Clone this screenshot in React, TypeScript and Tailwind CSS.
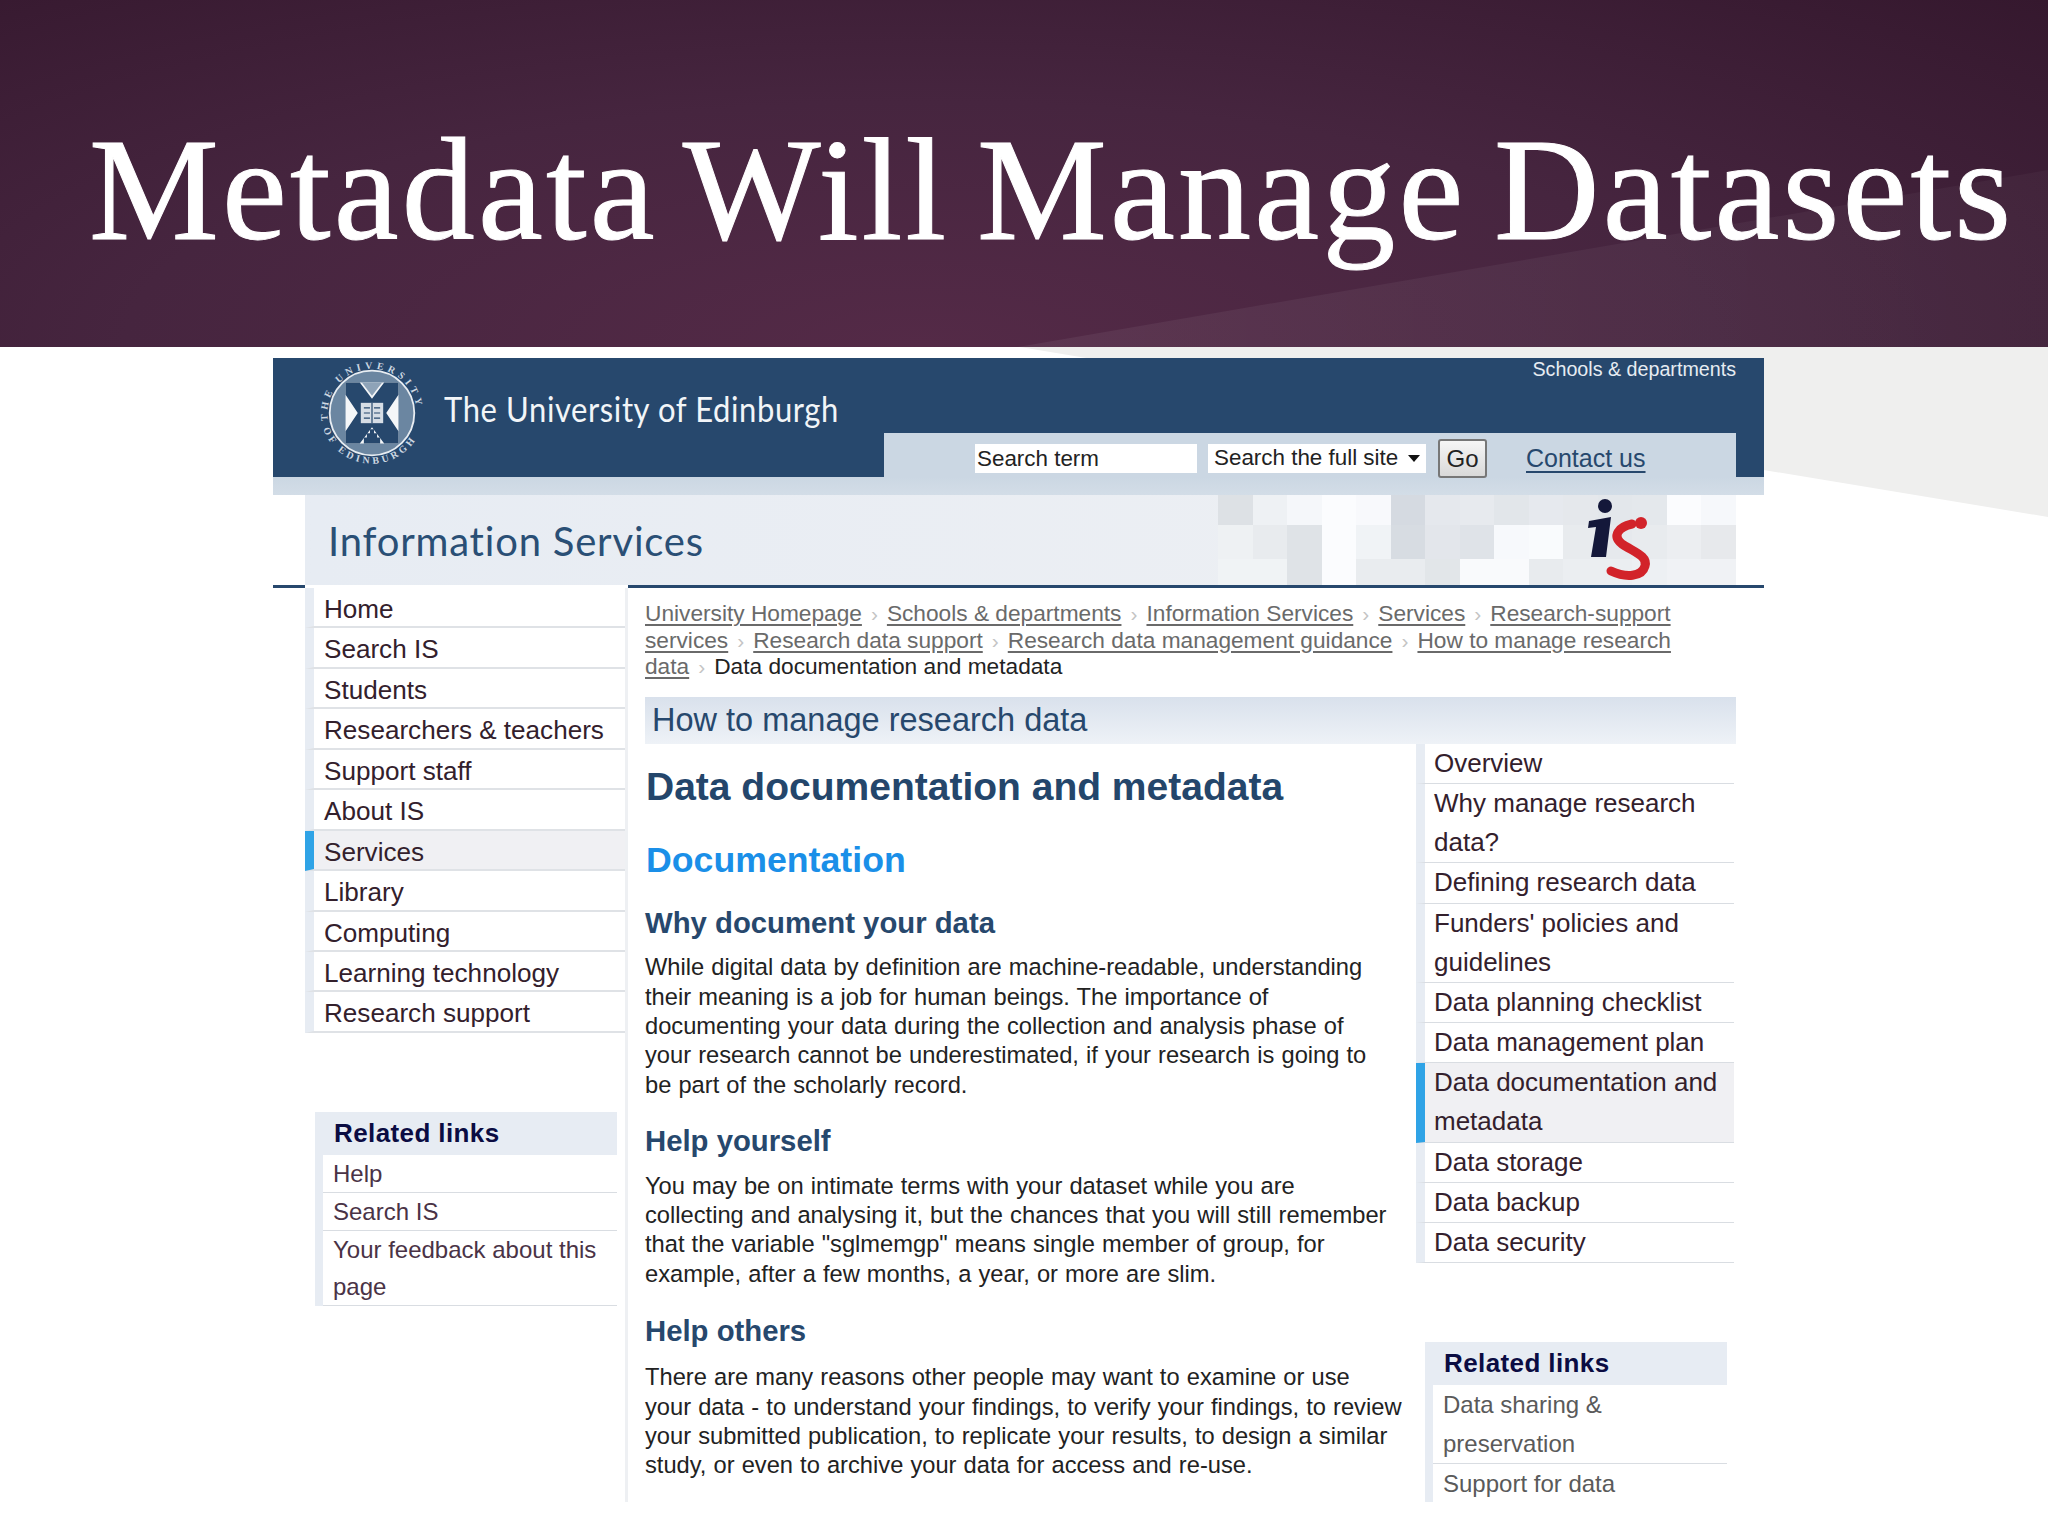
const mosaic = [
  ['#dde1e5', '#eef1f4', '#f5f7fa', '#fbfcfe', '#f8f9fc', '#d5dae1', '#e5e8ed', '#e7eaee', '#e2e6ea', '#e6e9ee', '#e5e8ec', '#e3e7eb', '#e4e8ec', '#fbfcfe', '#f6f8fb'],
  ['#eef1f3', '#e8ebee', '#dfe3e7', '#fbfcfe', '#f0f3f6', '#d7dce2', '#e3e6eb', '#dfe3e8', '#f7f9fc', '#f9fbfd', '#e8ebee', '#e6e9ed', '#e8ebee', '#eceef1', '#e7e9ec'],
  ['#f0f3f5', '#f0f3f5', '#dfe3e7', '#fbfcfe', '#e9ecef', '#e9ecef', '#e2e6e9', '#f9fafc', '#f9fafc', '#e8ebee', '#ebeef1', '#ebeef1', '#edf0f3', '#f0f2f5', '#f0f2f5'],
]

const leftNav = ['Home', 'Search IS', 'Students', 'Researchers & teachers', 'Support staff', 'About IS', 'Services', 'Library', 'Computing', 'Learning technology', 'Research support']

const rightNav = [
  { label: 'Overview' },
  { label: 'Why manage research data?' },
  { label: 'Defining research data' },
  { label: "Funders' policies and guidelines" },
  { label: 'Data planning checklist' },
  { label: 'Data management plan' },
  { label: 'Data documentation and metadata', active: true },
  { label: 'Data storage' },
  { label: 'Data backup' },
  { label: 'Data security' },
]

function Seal() {
  return (
    <svg width="108" height="108" viewBox="0 0 120 120" className="shrink-0">
      <defs>
        <path id="sealTop" d="M12 72 A49.5 49.5 0 1 1 109 68" />
        <path id="sealBottom" d="M4 70 A57 57 0 0 0 116 70" />
      </defs>
      <text fill="#ced8e2" fontSize="11" fontWeight="bold" fontFamily="Liberation Serif, serif" letterSpacing="4.6">
        <textPath href="#sealTop" startOffset="2%">THE UNIVERSITY</textPath>
      </text>
      <text fill="#ced8e2" fontSize="11" fontWeight="bold" fontFamily="Liberation Serif, serif" letterSpacing="3.8">
        <textPath href="#sealBottom" startOffset="5%">OF EDINBURGH</textPath>
      </text>
      <circle cx="60" cy="60" r="47" fill="#6b86a1" stroke="#e8edf2" strokeWidth="2" />
      <g transform="translate(60 60) scale(1.13) translate(-60 -60)">
        <rect x="34" y="30" width="52" height="60" fill="#f4f6f8" />
        <path d="M34 30 L48 30 L60 46 L72 30 L86 30 L86 42 L74 60 L86 78 L86 90 L72 90 L60 74 L48 90 L34 90 L34 78 L46 60 L34 42 Z" fill="#27486d" />
        <path d="M50 30 L70 30 L60 43 Z" fill="#8ea3b8" />
        <rect x="49" y="50" width="22" height="20" fill="#d6dde5" />
        <path d="M60 50 V70 M52 55 H58 M62 55 H68 M52 60 H58 M62 60 H68 M52 65 H58 M62 65 H68" stroke="#27486d" strokeWidth="1.2" />
        <path d="M52 90 V84 H55 V80 H58 V76 H62 V80 H65 V84 H68 V90 Z" fill="#27486d" />
      </g>
    </svg>
  )
}

function IsLogo() {
  return (
    <svg viewBox="1585 495 70 90" className="absolute left-[367px] top-0 w-[70px] h-[90px]">
      <circle cx="1605" cy="506" r="7" fill="#14183a" />
      <path d="M1589 521 L1611 517 L1606 557 L1591 557 L1596 527 L1588 528 Z" fill="#14183a" />
      <circle cx="1641" cy="523" r="6" fill="#d2232a" />
      <path d="M1632 524 C1618 527 1612 536 1622 544 C1634 552 1648 556 1645 566 C1642 577 1626 578 1611 571" fill="none" stroke="#d2232a" strokeWidth="9" strokeLinecap="round" />
    </svg>
  )
}

function Crumb({ children }: { children: React.ReactNode }) {
  return <a className="underline underline-offset-[3px] text-[#6a6a6a]">{children}</a>
}

function Sep() {
  return <span className="inline-block w-[25px] text-center text-[#c4c4c4] text-[21px] leading-none">›</span>
}

function RelatedBox({ items, lead }: { items: string[]; lead: string }) {
  return (
    <div className="w-[302px] bg-[#e7ecf3]">
      <div className="h-[43px] flex items-center pl-[19px] text-[26px] font-bold tracking-[0.4px] text-[#0b0c42]">Related links</div>
      <ul className="ml-[8px] bg-white">
        {items.map((item) => (
          <li key={item} className={`pl-[10px] pr-2 text-[24px] border-b border-[#d9dde2] ${lead}`}>
            {item}
          </li>
        ))}
      </ul>
    </div>
  )
}

export default function App() {
  return (
    <div className="relative w-[2048px] h-[1536px] overflow-hidden bg-white font-['Liberation_Sans',Arial,sans-serif]">
      {/* slide title */}
      <header className="relative h-[347px] bg-[radial-gradient(ellipse_at_45%_100%,#542a47_0%,#46253f_50%,#35182e_100%)]">
        <div className="absolute inset-0 bg-gradient-to-r from-white/[0.09] to-white/[0.03] [clip-path:polygon(1018px_347px,2048px_170px,2048px_347px)]" />
        <h1 className="relative pl-[89px] pt-[117px] text-[146px] leading-none tracking-[3.2px] [word-spacing:-12px] text-white whitespace-nowrap font-['Liberation_Serif',serif] [-webkit-text-stroke:1px_white]">
          Metadata Will Manage Datasets
        </h1>
      </header>

      <div className="relative h-[1189px]">
        <div className="absolute inset-0 bg-[#efefee] [clip-path:polygon(1020px_0px,2048px_0px,2048px_170px)]" />

        {/* embedded page screenshot */}
        <div className="relative ml-[273px] top-[11px] w-[1491px] h-[1144px] overflow-hidden bg-white">
          <div className="flex h-[119px] bg-[#27486d]">
            <div className="flex pl-[45px] pt-[1px] w-[611px]">
              <Seal />
              <div className="pl-[18px] pt-[31px] text-[31px] leading-[40px] text-[#f2f5f8] font-['Lato',sans-serif] tracking-[0.6px] whitespace-nowrap origin-left scale-y-[1.12]">
                The University of Edinburgh
              </div>
            </div>
            <div className="flex flex-col w-[852px]">
              <div className="text-right text-[19.7px] leading-[22px] text-[#e6ecf2]">Schools &amp; departments</div>
              <div className="mt-auto h-[44px] bg-[#cbd7e3] flex items-center pl-[91px] pt-[6px]">
                <div className="w-[222px] h-[29px] bg-white pl-[2px] text-[22.4px] leading-[30px] text-[#222]">Search term</div>
                <div className="ml-[11px] w-[218px] h-[29px] bg-white pl-[6px] flex items-center text-[22.4px] leading-[30px] text-[#222]">
                  Search the full site
                  <span className="ml-[10px] w-0 h-0 border-x-[6px] border-x-transparent border-t-[7px] border-t-[#111]" />
                </div>
                <div className="ml-[12px] w-[49px] h-[39px] shrink-0 rounded-[3px] border-2 border-[#777] bg-gradient-to-b from-[#f6f6f6] to-[#d9d9d9] text-center text-[24px] leading-[35px] text-[#222]">Go</div>
                <a className="ml-[39px] mt-[2px] text-[25px] underline underline-offset-[4px] text-[#27486d]">Contact us</a>
              </div>
            </div>
          </div>

          <div className="h-[18px] bg-gradient-to-b from-[#cbd7e3] to-[#d3dde7]" />

          <div className="flex h-[90px] pl-[32px] pr-[28px]">
            <div className="flex-1 flex bg-gradient-to-r from-[#e7ecf3] to-[#eef0f3]">
              <div className="w-[913px] pl-[23px] pt-[23px] text-[40px] leading-[46px] text-[#2a4f75] font-['Lato',sans-serif] tracking-[0.8px] whitespace-nowrap">
                Information Services
              </div>
              <div className="relative flex-1 flex flex-col">
                {mosaic.map((row, r) => (
                  <div key={r} className={`flex ${r === 0 ? 'h-[30px]' : r === 1 ? 'h-[34px]' : 'h-[26px]'}`}>
                    {row.map((c, i) => (
                      <div key={i} className="flex-1" style={{ backgroundColor: c }} />
                    ))}
                  </div>
                ))}
                <IsLogo />
              </div>
            </div>
          </div>

          <div className="flex h-[3px]">
            <div className="w-[32px] bg-[#27486d]" />
            <div className="w-[323px]" />
            <div className="flex-1 bg-[#27486d]" />
          </div>

          <div className="flex">
            {/* left column */}
            <div className="w-[355px] shrink-0 pl-[32px]">
              <ul className="w-[320px] text-[26.1px] text-[#33202c]">
                {leftNav.map((item) => (
                  <li
                    key={item}
                    className={`h-[40.45px] pt-[2px] leading-[38px] pl-[10px] border-l-[9px] border-b-2 border-b-[#dfe2e6] ${item === 'Services' ? 'border-l-[#2fa3e6] bg-[#f0f0f3]' : 'border-l-[#e7ecf3]'}`}
                  >
                    {item}
                  </li>
                ))}
              </ul>
              <div className="mt-[79px] ml-[10px] text-[#4a3346]">
                <RelatedBox items={['Help', 'Search IS', 'Your feedback about this page']} lead="leading-[37px]" />
              </div>
            </div>

            {/* page content */}
            <div className="flex-1 border-l-[3px] border-[#eef0f3] -ml-[3px] pl-[17px] pr-[28px]">
              <p className="pt-[12px] text-[22.7px] leading-[26.5px] text-[#222] whitespace-nowrap">
                <Crumb>University Homepage</Crumb><Sep /><Crumb>Schools &amp; departments</Crumb><Sep /><Crumb>Information Services</Crumb><Sep /><Crumb>Services</Crumb><Sep /><Crumb>Research-support</Crumb>
                <br />
                <Crumb>services</Crumb><Sep /><Crumb>Research data support</Crumb><Sep /><Crumb>Research data management guidance</Crumb><Sep /><Crumb>How to manage research</Crumb>
                <br />
                <Crumb>data</Crumb><Sep />Data documentation and metadata
              </p>

              <div className="mt-[17.5px] h-[47px] pl-[7px] bg-gradient-to-b from-[#d9e1ec] to-[#eef2f7] text-[32.5px] leading-[47px] text-[#27486d]">
                How to manage research data
              </div>

              <div className="flex">
                <div className="w-[771px] shrink-0 text-[#222]">
                  <h2 className="mt-[21px] ml-[1px] text-[39px] leading-[44px] font-bold text-[#24466b]">Data documentation and metadata</h2>
                  <h2 className="mt-[31px] ml-[1px] text-[35.7px] leading-[40px] font-bold text-[#1a8fe8]">Documentation</h2>

                  <h3 className="mt-[26px] text-[29.3px] leading-[34px] font-bold text-[#27486d]">Why document your data</h3>
                  <p className="mt-[13.4px] text-[23.7px] leading-[29.3px] [word-spacing:0.5px] whitespace-nowrap">
                    While digital data by definition are machine-readable, understanding
                    <br />their meaning is a job for human beings. The importance of
                    <br />documenting your data during the collection and analysis phase of
                    <br />your research cannot be underestimated, if your research is going to
                    <br />be part of the scholarly record.
                  </p>

                  <h3 className="mt-[24px] text-[29.3px] leading-[34px] font-bold text-[#27486d]">Help yourself</h3>
                  <p className="mt-[14px] text-[23.7px] leading-[29.3px] [word-spacing:0.5px] whitespace-nowrap">
                    You may be on intimate terms with your dataset while you are
                    <br />collecting and analysing it, but the chances that you will still remember
                    <br />that the variable "sglmemgp" means single member of group, for
                    <br />example, after a few months, a year, or more are slim.
                  </p>

                  <h3 className="mt-[25.4px] text-[29.3px] leading-[34px] font-bold text-[#27486d]">Help others</h3>
                  <p className="mt-[15px] text-[23.7px] leading-[29.3px] [word-spacing:0.5px] whitespace-nowrap">
                    There are many reasons other people may want to examine or use
                    <br />your data - to understand your findings, to verify your findings, to review
                    <br />your submitted publication, to replicate your results, to design a similar
                    <br />study, or even to archive your data for access and re-use.
                  </p>
                </div>

                {/* right column */}
                <div className="w-[320px] shrink-0">
                  <ul className="w-[318px] text-[26px] text-[#33202c]">
                    {rightNav.map((item) => (
                      <li
                        key={item.label}
                        className={`leading-[39.15px] pl-[9px] pr-[6px] border-l-[9px] border-b border-b-[#d9dde2] ${item.active ? 'border-l-[#2fa3e6] bg-[#f0f0f3]' : 'border-l-[#e7ecf3]'}`}
                      >
                        {item.label}
                      </li>
                    ))}
                  </ul>
                  <div className="mt-[79px] ml-[9px] text-[#5a5a5a]">
                    <RelatedBox items={['Data sharing & preservation', 'Support for data']} lead="leading-[39px]" />
                  </div>
                </div>
              </div>
            </div>
          </div>
        </div>
      </div>
    </div>
  )
}
